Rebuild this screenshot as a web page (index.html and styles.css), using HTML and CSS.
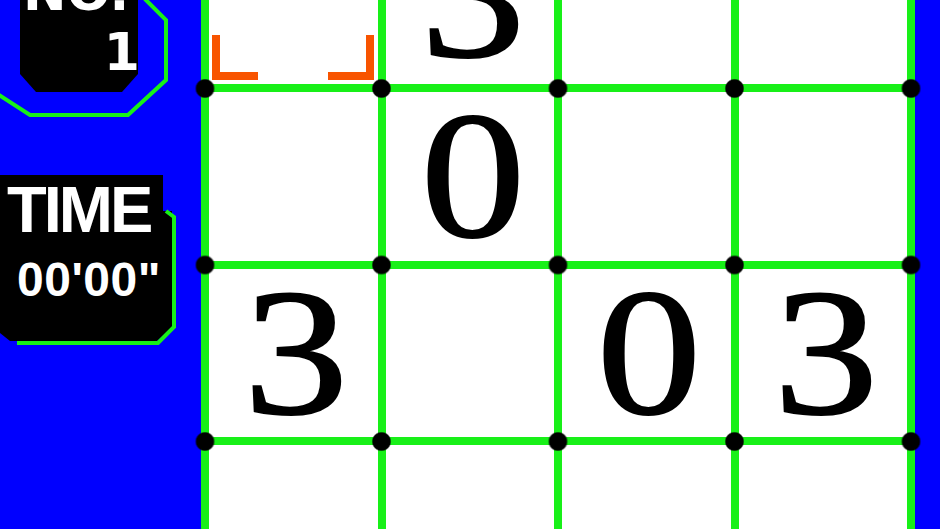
FILE: index.html
```html
<!DOCTYPE html>
<html>
<head>
<meta charset="utf-8">
<title>Puzzle</title>
<link rel="stylesheet" href="styles.css">
</head>
<body>
<div class="screen">
  <aside class="side">
    <div class="panel no-panel">
      <svg class="panel-art" viewBox="0 0 201 165" width="201" height="165">
        <polygon class="art-black" points="20,0 138,0 138,119 122,137 36,137 20,119"/>
        <polyline class="art-green" points="-12,133 30,160 128,160 166,125 166,65 146,45 100,-1"/>
      </svg>
      <div class="no-text">
        <div class="no-label">NO.</div>
        <div class="no-num">1</div>
      </div>
    </div>
    <div class="panel time-panel">
      <svg class="panel-art" viewBox="0 0 180 172" width="180" height="172">
        <rect class="art-black" x="0" y="0" width="163" height="40"/>
        <polygon class="art-black" points="0,36 172,36 172,152 157,166 10,166 0,158"/>
        <polyline class="art-green" points="166,36 174,42 174,152 158,168 17,168"/>
      </svg>
      <div class="time-text">
        <div class="time-label">TIME</div>
        <div class="time-value">00'00"</div>
      </div>
    </div>
  </aside>
  <main class="board">
    <div class="cell cursor">
      <span class="corner tl"></span><span class="corner tr"></span>
      <span class="corner bl"></span><span class="corner br"></span>
    </div>
    <div class="cell top-row"><span class="digit">3</span></div>
    <div class="cell"></div>
    <div class="cell"></div>

    <div class="cell"></div>
    <div class="cell"><span class="digit">0</span></div>
    <div class="cell"></div>
    <div class="cell"></div>

    <div class="cell"><span class="digit">3</span></div>
    <div class="cell"></div>
    <div class="cell"><span class="digit">0</span></div>
    <div class="cell"><span class="digit">3</span></div>

    <div class="cell"></div>
    <div class="cell"></div>
    <div class="cell"></div>
    <div class="cell"></div>
  </main>
</div>
</body>
</html>
```

FILE: styles.css
```css
* { box-sizing: border-box; }

html, body {
  margin: 0;
  padding: 0;
}

body {
  background: #0000ff;
  width: 940px;
  height: 529px;
  overflow: hidden;
}

.screen {
  display: flex;
  align-items: flex-start;
  height: 529px;
  overflow: hidden;
}

.side {
  width: 201px;
  flex: none;
  display: flex;
  flex-direction: column;
}

.panel {
  position: relative;
}

.panel-art {
  position: absolute;
  left: 0;
  top: 0;
  overflow: visible;
}

.art-black { fill: #000; }

.art-green {
  fill: none;
  stroke: #18f018;
  stroke-width: 4;
  stroke-linejoin: miter;
}

.no-panel {
  margin-top: -45px;
  height: 165px;
}

.no-text {
  position: relative;
  width: 140px;
  padding: 7px 0 0 23px;
  color: #fff;
  font-family: "DejaVu Sans", "Liberation Sans", sans-serif;
  font-weight: bold;
  font-size: 52px;
  line-height: 60px;
}

.no-num { text-align: right; }

.time-panel {
  margin-top: 55px;
  width: 176px;
  height: 170px;
}

.time-text {
  position: relative;
  color: #fff;
  font-family: "Liberation Sans", Arial, sans-serif;
  font-weight: bold;
}

.time-label {
  font-size: 65px;
  line-height: 70px;
  letter-spacing: -3px;
  padding: 0 0 0 7px;
}

.time-value {
  font-size: 48px;
  line-height: 50px;
  margin-top: 10px;
  padding-left: 17px;
  letter-spacing: 0.5px;
  white-space: nowrap;
}

.board {
  flex: none;
  position: relative;
  margin-top: -92.5px;
  display: grid;
  grid-template-columns: repeat(4, 168.5px);
  grid-auto-rows: 168.5px;
  gap: 8px;
  padding: 8px;
  background: #18f018;
}

.board::after {
  content: "";
  position: absolute;
  inset: -10px;
  background-image: radial-gradient(circle, #000 8.5px, rgba(0, 0, 0, 0) 10px);
  background-size: 176.5px 176.5px;
  background-position: -74.25px -74.25px;
  pointer-events: none;
}

.cell {
  position: relative;
  overflow: hidden;
  background: #fff;
  display: flex;
  align-items: center;
  justify-content: center;
  padding-left: 6px;
  color: #000;
  font-family: "Liberation Serif", "Times New Roman", serif;
  font-size: 180px;
  line-height: 180px;
}

.cell.top-row {
  padding-bottom: 8px;
}

.digit {
  display: inline-block;
  transform: scaleX(1.16);
  -webkit-text-stroke: 2px #000;
}

.corner {
  position: absolute;
  width: 46px;
  height: 45px;
  border: 0 solid #f85400;
}

.corner.tl { left: 3px; top: 4px; border-left-width: 8px; border-top-width: 8px; }
.corner.tr { right: 4px; top: 4px; border-right-width: 8px; border-top-width: 8px; }
.corner.bl { left: 3px; bottom: 4px; border-left-width: 8px; border-bottom-width: 8px; }
.corner.br { right: 4px; bottom: 4px; border-right-width: 8px; border-bottom-width: 8px; }
```
